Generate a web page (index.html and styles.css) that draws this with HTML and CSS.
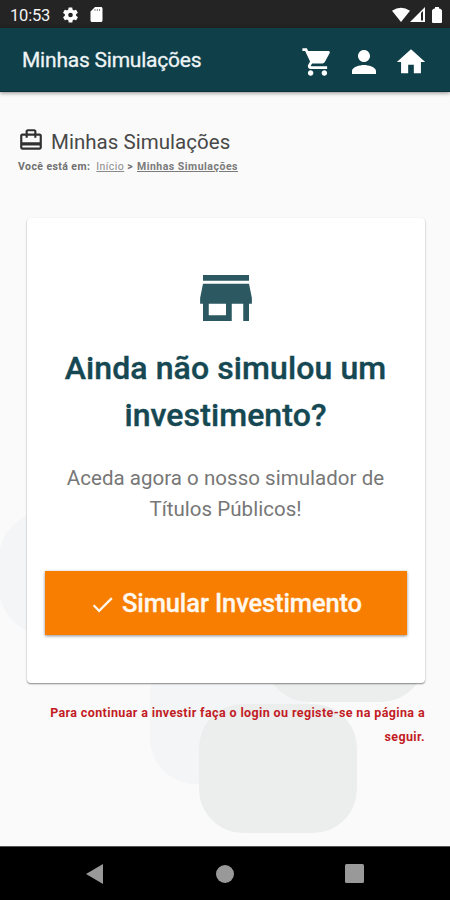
FILE: index.html
```html
<!DOCTYPE html>
<html lang="pt">
<head>
<meta charset="utf-8">
<title>Minhas Simulações</title>
<link rel="stylesheet" href="styles.css">
</head>
<body>
<div class="status">
  <span class="time">10:53</span>
  <svg class="gear" viewBox="2 2 20 20"><path fill-rule="evenodd" d="M19.400 13a7.500 7.500 0 0 0 0-2l2.100-1.600c.2-.2.3-.5.1-.7l-2-3.400c-.1-.2-.4-.3-.6-.2l-2.500 1a7 7 0 0 0-1.700-1l-.4-2.700c0-.2-.2-.4-.5-.4h-4c-.2 0-.4.2-.5.4L9 5.100a7 7 0 0 0-1.700 1l-2.500-1c-.2-.1-.5 0-.6.2l-2 3.400c-.1.2-.1.5.1.7L4.500 11a7.500 7.500 0 0 0 0 2l-2.100 1.600c-.2.2-.2.5-.1.7l2 3.400c.1.2.4.3.6.2l2.500-1a7 7 0 0 0 1.700 1l.4 2.700c0 .2.2.4.5.4h4c.2 0 .4-.2.5-.4l.4-2.700a7 7 0 0 0 1.700-1l2.500 1c.2.1.5 0 .6-.2l2-3.400c.1-.2.1-.5-.1-.7zM12 8.900a3.100 3.100 0 1 1 0 6.200a3.100 3.100 0 0 1 0-6.200z"/></svg>
  <svg class="sd" viewBox="4 2 16 20"><path fill-rule="evenodd" d="M18 2h-8L4 8v12c0 1.100.9 2 2 2h12c1.100 0 2-.9 2-2V4c0-1.100-.9-2-2-2zM9.500 5h1v2h-1zm3 0h1v2h-1zm3 0h1v2h-1z"/></svg>
  <div class="signals">
    <svg width="18" height="16" viewBox="0 0 19 16"><path d="M0 3.500Q9.500-3 19 3.500L9.500 15.500z"/></svg>
    <svg width="15" height="15" viewBox="0 0 15 15"><path fill-rule="evenodd" d="M15 0v15H0zM11 6v7.500h2V4z"/></svg>
    <svg class="battery" width="10" height="16" viewBox="0 0 10 16"><path d="M3 0h4v1.500q3 .5 3 2.500v11q0 1-1 1H1q-1 0-1-1V4q0-2 3-2.500z"/></svg>
  </div>
</div>
<header class="appbar">
  <span class="apptitle">Minhas Simulações</span>
  <div class="actions">
    <svg width="33" height="34" viewBox="0 0 24 24"><path d="M7 18c-1.100 0-1.990.9-1.990 2S5.900 22 7 22s2-.9 2-2-.9-2-2-2zM1 2v2h2l3.600 7.590-1.350 2.450c-.16.280-.250.610-.250.960 0 1.100.9 2 2 2h12v-2H7.420c-.140 0-.250-.110-.250-.250l.030-.120.900-1.630h7.450c.750 0 1.410-.410 1.750-1.030l3.580-6.490A1 1 0 0 0 20 4H5.210l-.940-2zm16 16c-1.100 0-1.990.9-1.990 2s.890 2 1.990 2 2-.9 2-2-.9-2-2-2z"/></svg>
    <svg width="36" height="36" viewBox="0 0 24 24"><path d="M12 12c2.210 0 4-1.790 4-4s-1.790-4-4-4-4 1.790-4 4 1.790 4 4 4zm0 2c-2.670 0-8 1.340-8 4v2h16v-2c0-2.660-5.330-4-8-4z"/></svg>
    <svg width="34" height="36" viewBox="0 0 24 24"><path d="M10 20v-6h4v6h5v-8h3L12 3 2 12h3v8z"/></svg>
  </div>
</header>
<main class="page">
  <svg class="backdrop" viewBox="0 0 450 754">
    <rect class="pale" x="-1" y="419" width="158" height="124" rx="48"/>
    <rect class="pale" x="150" y="558" width="159" height="134" rx="46"/>
    <rect class="tint" x="265" y="466" width="160" height="144" rx="44"/>
    <rect class="tint" x="199" y="612" width="158" height="129" rx="44"/>
  </svg>
  <h1 class="heading">
    <svg width="26" height="26" viewBox="0 0 24 24"><path fill-rule="evenodd" d="M20 6h-3V4c0-1.110-.890-2-2-2H9c-1.110 0-2 .890-2 2v2H4c-1.110 0-2 .890-2 2v11c0 1.110.890 2 2 2h16c1.110 0 2-.890 2-2V8c0-1.110-.890-2-2-2zM9 4h6v2H9zm11 15H4v-2h16zm0-5H4V8h3v2h2V8h6v2h2V8h3z"/></svg>
    <span>Minhas Simulações</span>
  </h1>
  <nav class="crumbs"><b>Você está em:</b><a class="home">Início</a><b>&gt;</b><a class="here">Minhas Simulações</a></nav>
  <section class="card">
    <svg class="store" viewBox="3 4 18 16"><path d="M20 4H4v2h16zm1 10v-2l-1-5H4l-1 5v2h1v6h10v-6h4v6h2v-6zm-9 4H6v-4h6z"/></svg>
    <h2 class="question">Ainda não simulou um<br>investimento?</h2>
    <p class="lead">Aceda agora o nosso simulador de<br>Títulos Públicos!</p>
    <button class="cta"><svg width="27" height="27" viewBox="0 0 24 24"><path d="M9 16.170L4.830 12l-1.420 1.410L9 19 21 7l-1.410-1.410z"/></svg><span>Simular Investimento</span></button>
  </section>
  <p class="notice">Para continuar a investir faça o login ou registe-se na página a<br>seguir.</p>
</main>
<footer class="navbar">
  <svg width="17" height="20" viewBox="0 0 17 20"><path d="M17 0v20L0 10z"/></svg>
  <svg width="18" height="18" viewBox="0 0 18 18"><circle cx="9" cy="9" r="9"/></svg>
  <svg width="19" height="19" viewBox="0 0 19 19"><rect width="19" height="19" rx="1.500"/></svg>
</footer>
</body>
</html>
```
FILE: styles.css
```css
* { box-sizing: border-box; }
body { margin: 0; width: 450px; height: 900px; overflow: hidden; display: flex; flex-direction: column; font-family: Roboto, sans-serif; background: #fafafa; }
svg { display: block; flex: none; }
.status { height: 28px; background: #242424; color: #f4f4f4; fill: #fff; display: flex; align-items: center; padding: 1px 8px 0 10px; }
.time { font-size: 16.500px; letter-spacing: -.2px; width: 53px; padding-top: 1px; }
.gear { width: 15px; height: 16px; }
.sd { width: 13px; height: 15px; margin-left: 12px; }
.signals { margin-left: auto; display: flex; align-items: center; }
.battery { margin-left: 7px; }
.appbar { height: 64px; flex: none; background: #0f404a; border-bottom: 1px solid #09323c; box-shadow: 0 1px 4px rgba(0,0,0,.45); color: #eef4f5; fill: #fff; display: flex; align-items: center; justify-content: space-between; padding: 5px 22px 0 22px; z-index: 1; }
.apptitle { font-size: 21px; letter-spacing: -.22px; padding-bottom: 4px; -webkit-text-stroke: .3px #eef4f5; }
.actions { display: flex; align-items: center; gap: 12px; }
.page { position: relative; flex: 1; padding: 35px 25px 0 26px; }
.backdrop { position: absolute; inset: 0; width: 450px; height: 754px; z-index: -1; }
.pale { fill: #f3f5f6; }
.tint { fill: #eceeee; }
.heading { margin: 0 0 0 -8px; height: 28px; display: flex; align-items: center; gap: 7px; font-size: 20.500px; font-weight: 400; color: #484848; fill: #303030; letter-spacing: .03px; }
.heading svg { margin-top: -2px; }
.heading span { padding-top: 1px; }
.crumbs { display: flex; height: 22px; align-items: center; margin-left: -8px; font-size: 10.500px; letter-spacing: .42px; color: #707070; white-space: pre; }
.crumbs a { text-decoration: underline; }
.home { color: #8b8b8b; margin: 0 3px 0 6px; }
.here { font-weight: 700; color: #7b7b7b; margin-left: 4px; letter-spacing: .5px; }
.card { margin: 41px 0 0 1px; height: 465px; border-radius: 4px; background: #fff; box-shadow: 0 1px 2px rgba(0,0,0,.35), 0 1px 1px rgba(0,0,0,.15); display: flex; flex-direction: column; align-items: center; padding: 57px 18px 0 17px; }
.store { width: 52px; height: 46px; fill: #2b5861; }
.question { margin: 24px 0 0; font-size: 32px; letter-spacing: .1px; line-height: 47px; font-weight: 500; -webkit-text-stroke: .4px #154852; color: #154852; text-align: center; white-space: nowrap; }
.lead { margin: 24px 0 0; font-size: 20.500px; letter-spacing: .03px; line-height: 31px; color: #777; text-align: center; white-space: nowrap; }
.cta { margin-top: 46px; width: 362px; height: 64px; flex: none; border: 0; background: #f77e00; color: #fff8ef; fill: #fff8ef; box-shadow: 0 1px 3px rgba(0,0,0,.45); font: 500 25.500px Roboto, sans-serif; letter-spacing: -.12px; -webkit-text-stroke: .3px #fff8ef; display: flex; align-items: center; justify-content: center; gap: 6px; padding: 0; white-space: nowrap; }
.cta svg { margin-top: 3px; }
.notice { margin: 18px 0 0; font-size: 12.500px; letter-spacing: .38px; line-height: 24px; font-weight: 700; color: #c21c25; text-align: right; white-space: nowrap; }
.navbar { height: 54px; flex: none; background: #000; border-top: 1px solid #555; fill: #999; display: flex; align-items: center; justify-content: space-between; padding: 0 86px; }
.navbar circle { transform: translateX(1px); }
.navbar svg { overflow: visible; }
```
